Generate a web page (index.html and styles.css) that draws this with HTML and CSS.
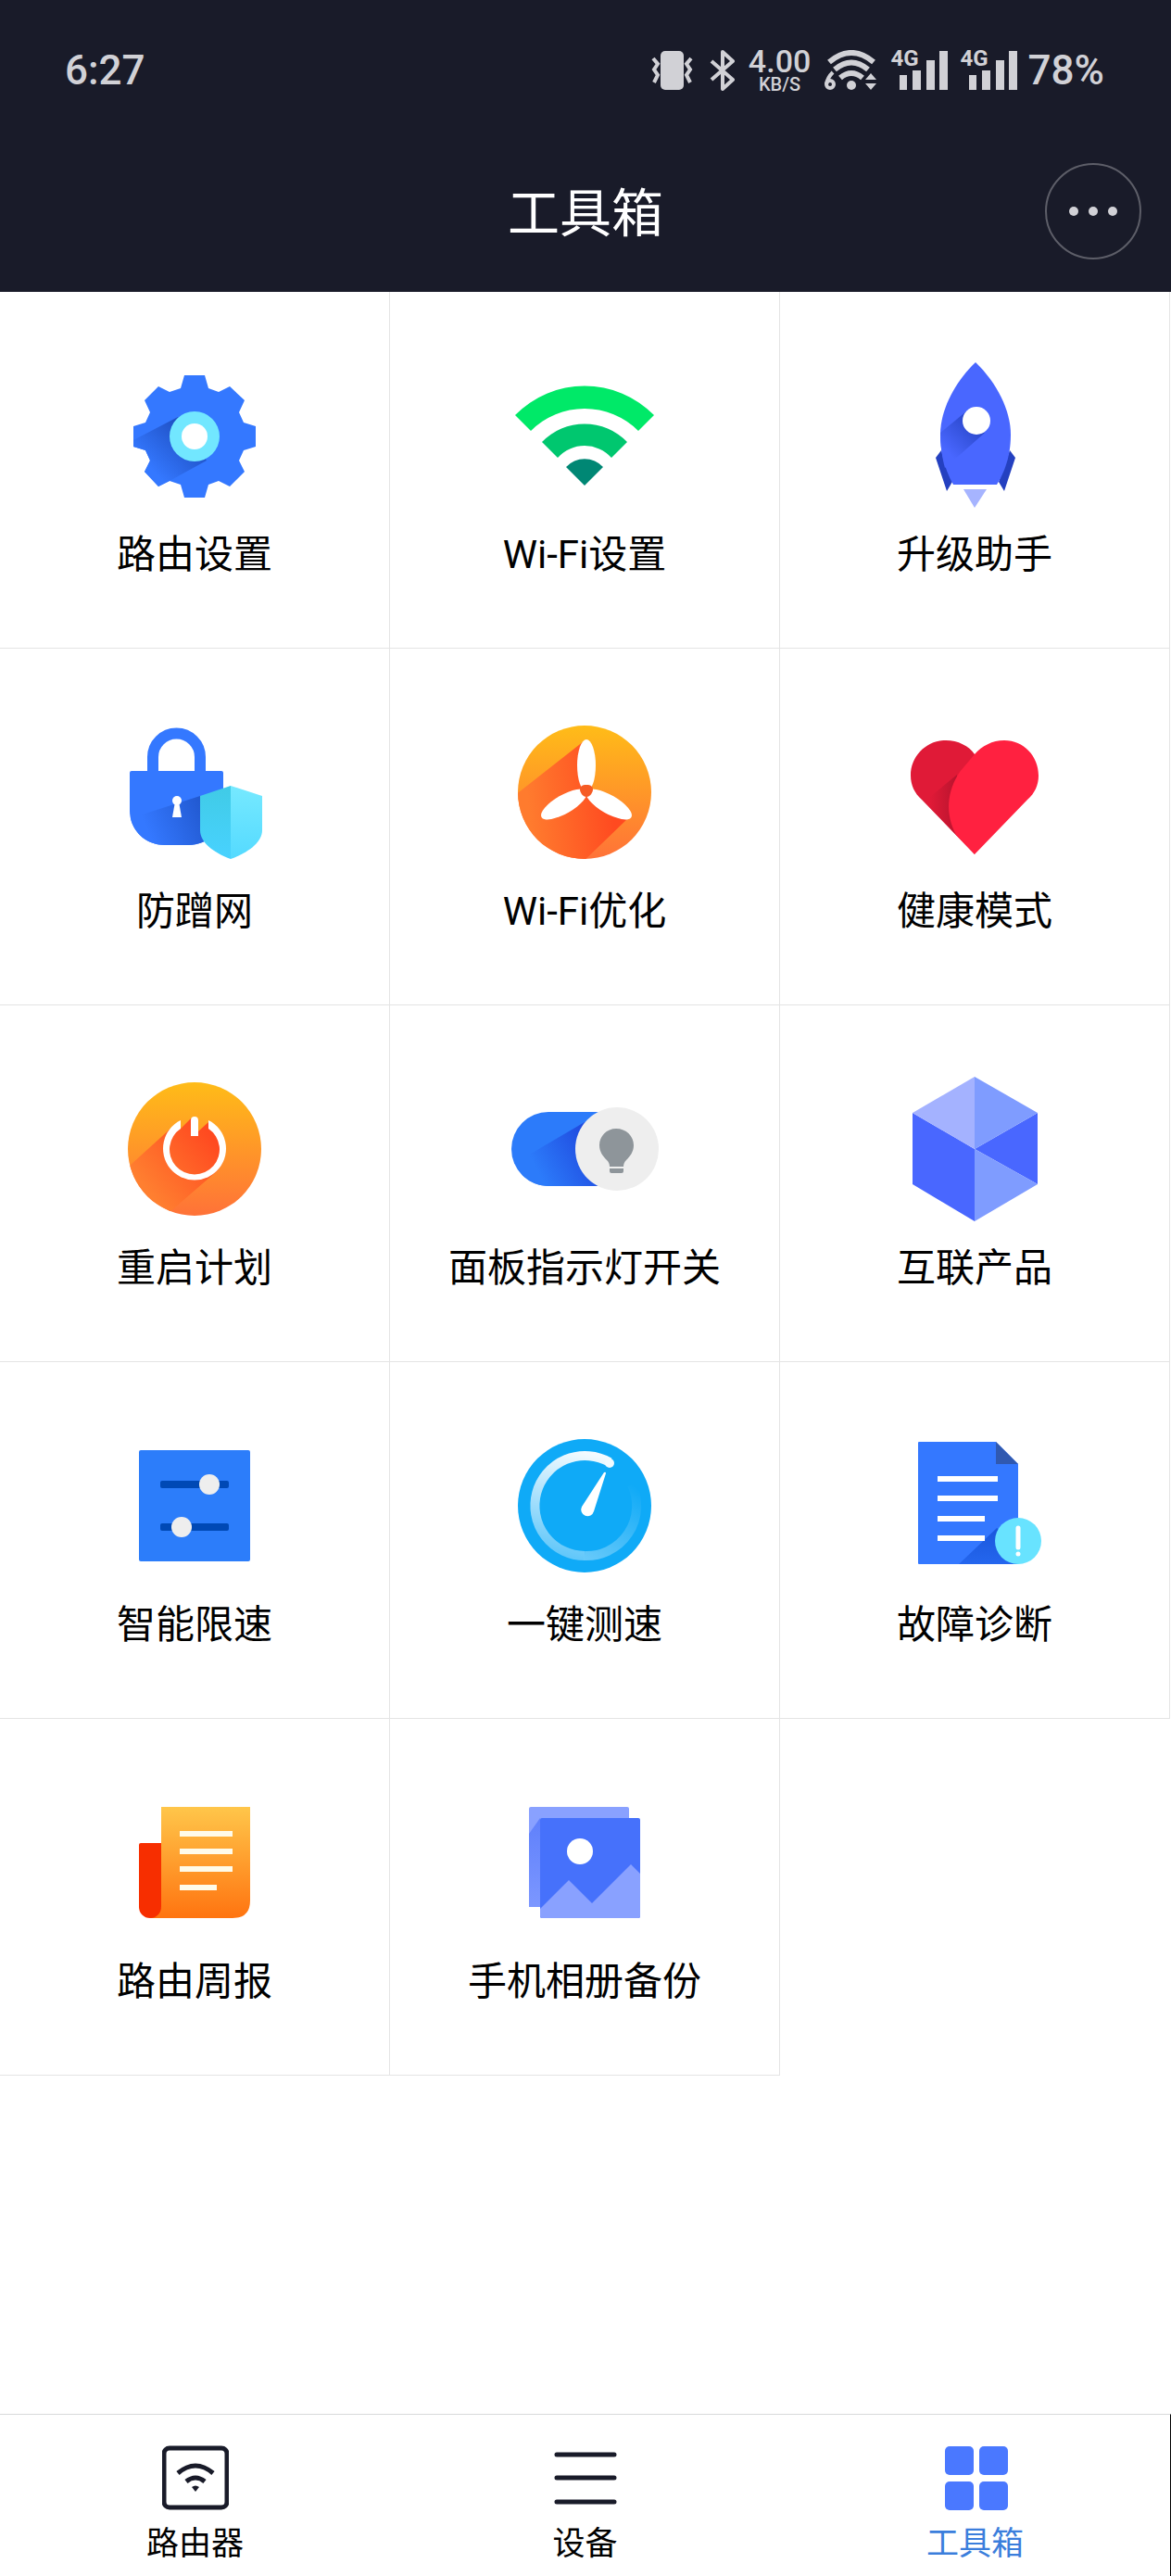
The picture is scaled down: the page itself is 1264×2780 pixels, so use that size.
FILE: index.html
```html
<!DOCTYPE html>
<html lang="zh-CN">
<head>
  <meta charset="UTF-8">
  <meta name="viewport" content="width=device-width, initial-scale=1">
  <title>工具箱</title>
  <link rel="stylesheet" href="styles.css">
</head>
<body>
  <header class="header">
    <div class="status">
      <span class="time">6:27</span>
      <div class="status-right">
        <svg width="50" height="44" viewBox="0 0 50 44" fill="none" stroke="#d1d1d6" stroke-width="4">
          <rect x="10" y="1" width="25" height="42" rx="5" fill="#d1d1d6" stroke="none"/>
          <path d="M2 9l5 6-4 6 4 6-4 8M43 9l-5 6 4 6-4 6 4 8"/>
        </svg>
        <svg width="29" height="44" viewBox="0 0 29 44" fill="none" stroke="#d1d1d6" stroke-width="4" stroke-linejoin="round">
          <path d="M3 12l23 20-11 10V2l11 10L3 32"/>
        </svg>
        <span class="speed"><span>4.00</span><small>KB/S</small></span>
        <svg width="58" height="44" viewBox="0 0 58 44" fill="none" stroke="#d1d1d6" stroke-width="6">
          <path d="M5 13Q29-7 53 13M11 21Q29 6 47 21M17 30Q29 20 41 30"/>
          <circle cx="29" cy="38" r="5" fill="#d1d1d6" stroke="none"/>
          <path d="M44 32l6-7 6 7zM44 36h12l-6 7z" fill="#d1d1d6" stroke="none"/>
          <path d="M9 24Q3 30 2 37" stroke-width="4"/>
          <circle cx="6" cy="37" r="4" stroke-width="4"/>
        </svg>
        <span class="signal">
          <b>4G</b>
          <svg width="63" height="44" viewBox="0 0 63 44" fill="#d1d1d6">
            <path d="M11 27h8v16h-8zM25 22h9v21h-9zM40 11h9v32h-9zM54 1h9v42h-9z"/>
          </svg>
        </span>
        <span class="signal">
          <b>4G</b>
          <svg width="63" height="44" viewBox="0 0 63 44" fill="#d1d1d6">
            <path d="M11 27h8v16h-8zM25 22h9v21h-9zM40 11h9v32h-9zM54 1h9v42h-9z"/>
          </svg>
        </span>
        <span class="battery">78%</span>
      </div>
    </div>
    <div class="titlebar">
      <h1>工具箱</h1>
      <button class="more" type="button" aria-label="更多"><i></i><i></i><i></i></button>
    </div>
  </header>

  <main class="tools">
    <a class="tool" href="#">
      <svg viewBox="0 0 160 160">
        <defs>
          <linearGradient id="gearShade" x1="75" y1="75" x2="34" y2="116" gradientUnits="userSpaceOnUse">
            <stop offset="0" stop-color="#1f50c4"/><stop offset="1" stop-color="#3478ff"/>
          </linearGradient>
        </defs>
        <path fill="#3478ff" d="M69 14h22l4 14 11 4 12-6 16 15-6 13 5 11 13 4v22l-13 4-5 11 6 12-16 16-12-6-11 4-4 14H69l-4-14-12-4-12 6-15-16 6-12-5-11-13-4V69l13-4 5-11-6-13 15-15 12 6 12-4z"/>
        <path fill="url(#gearShade)" d="M62 59L14 84v7l13 4 5 11-6 12 15 16 12-6 40-22z"/>
        <circle cx="80" cy="80" r="27" fill="#72e7ff"/>
        <circle cx="80" cy="80" r="14" fill="#fff"/>
      </svg>
      <span>路由设置</span>
    </a>
    <a class="tool" href="#">
      <svg viewBox="0 0 160 160">
        <path fill="#00e968" d="M5 57A105 105 0 0 1 155 57L138 74A82 82 0 0 0 22 74z"/>
        <path fill="#00c76f" d="M34 86A64 64 0 0 1 126 86L109 103A39 39 0 0 0 51 103z"/>
        <path fill="#008774" d="M60 113A27 27 0 0 1 100 113L80 133z"/>
      </svg>
      <span>Wi-Fi设置</span>
    </a>
    <a class="tool" href="#">
      <svg viewBox="0 0 160 160">
        <defs>
          <linearGradient id="rocketShade" x1="80" y1="66" x2="50" y2="96" gradientUnits="userSpaceOnUse">
            <stop offset="0" stop-color="#2b48cc"/><stop offset="1" stop-color="#4967ff"/>
          </linearGradient>
        </defs>
        <path fill="#2440c0" d="M44 95l-6 8 12 36 6-10zM118 95l6 8-12 36-6-10z"/>
        <path fill="#4967ff" d="M81 0C58 22 43 52 43 78c0 20 5 38 14 54h47c10-16 15-34 15-54C119 52 104 22 81 0z"/>
        <path fill="url(#rocketShade)" d="M71 53L43 76c0 14 2 27 5 38l43-38z"/>
        <circle cx="82" cy="63" r="15" fill="#fff"/>
        <path fill="#a6b4ff" d="M68 137h25l-13 20z"/>
      </svg>
      <span>升级助手</span>
    </a>
    <a class="tool" href="#">
      <svg viewBox="0 0 160 160">
        <defs>
          <linearGradient id="lockShade" x1="92" y1="95" x2="30" y2="122" gradientUnits="userSpaceOnUse">
            <stop offset="0" stop-color="#2158cf"/><stop offset="1" stop-color="#3478ff"/>
          </linearGradient>
          <linearGradient id="shieldLeft" x1="0" y1="0" x2="0" y2="1">
            <stop offset="0" stop-color="#40cbe6"/><stop offset="1" stop-color="#48d2ff"/>
          </linearGradient>
          <linearGradient id="shieldRight" x1="0" y1="0" x2="0" y2="1">
            <stop offset="0" stop-color="#76e9ff"/><stop offset="1" stop-color="#54daff"/>
          </linearGradient>
        </defs>
        <path fill="none" stroke="#3478ff" stroke-width="12" d="M35 58V41a25 25 0 0 1 51 0v17"/>
        <path fill="#3478ff" d="M12 56h97q2 0 2 2v41c0 20-16 37-38 37H48c-22 0-38-17-38-37V58q0-2 2-2z"/>
        <path fill="url(#lockShade)" d="M86 83L11 107c4 17 18 29 37 29h25q9 0 18-4z"/>
        <circle cx="61" cy="88" r="5" fill="#fff"/>
        <path fill="#fff" d="M59 89h4l3 17H56z"/>
        <path fill="url(#shieldLeft)" d="M119 72L86 83v37c0 13 14 24 33 31z"/>
        <path fill="url(#shieldRight)" d="M119 72l34 11v37c0 13-15 24-34 31z"/>
      </svg>
      <span>防蹭网</span>
    </a>
    <a class="tool" href="#">
      <svg viewBox="0 0 160 160">
        <defs>
          <linearGradient id="orange" x1="0" y1="0" x2="0" y2="1">
            <stop offset="0" stop-color="#ffbc18"/><stop offset="1" stop-color="#ff7238"/>
          </linearGradient>
          <linearGradient id="fanShade" x1="20" y1="100" x2="110" y2="90" gradientUnits="userSpaceOnUse">
            <stop offset="0" stop-color="#ff7b2e"/><stop offset="1" stop-color="#ff4a20"/>
          </linearGradient>
          <clipPath id="disc"><circle cx="80" cy="79" r="72"/></clipPath>
        </defs>
        <circle cx="80" cy="79" r="72" fill="url(#orange)"/>
        <path clip-path="url(#disc)" fill="url(#fanShade)" d="M79 24L0 86v76h70l58-56-46-28z"/>
        <g fill="#fff">
          <ellipse cx="82" cy="50" rx="10" ry="28"/>
          <ellipse cx="82" cy="50" rx="10" ry="28" transform="rotate(120 82 78)"/>
          <ellipse cx="82" cy="50" rx="10" ry="28" transform="rotate(240 82 78)"/>
        </g>
        <path fill="#f65b24" d="M82 71c5 0 7 2 7 5s-3 8-7 8-7-5-7-8 2-5 7-5z"/>
      </svg>
      <span>Wi-Fi优化</span>
    </a>
    <a class="tool" href="#">
      <svg viewBox="0 0 160 160">
        <defs>
          <linearGradient id="heartShade" x1="62" y1="88" x2="32" y2="88" gradientUnits="userSpaceOnUse">
            <stop offset="0" stop-color="#b8142e"/><stop offset="1" stop-color="#e01a37"/>
          </linearGradient>
        </defs>
        <path fill="#e01a37" d="M80 38C74 29 62 23 49 23C28 23 11 40 11 61c0 10 4 19 12 26l57 59z"/>
        <path fill="url(#heartShade)" d="M61 60L26 89l35 37z"/>
        <path fill="#ff2140" d="M80 38c8-9 19-15 32-15 21 0 37 17 37 38 0 10-4 19-12 26l-57 59-20-21c-12-23-10-47 4-68z"/>
      </svg>
      <span>健康模式</span>
    </a>
    <a class="tool" href="#">
      <svg viewBox="0 0 160 160">
        <defs>
          <linearGradient id="powerShade" x1="100" y1="68" x2="30" y2="125" gradientUnits="userSpaceOnUse">
            <stop offset="0" stop-color="#ff4a20"/><stop offset="1" stop-color="#ff7f30"/>
          </linearGradient>
        </defs>
        <circle cx="80" cy="79" r="72" fill="url(#orange)"/>
        <path clip-path="url(#disc)" fill="url(#powerShade)" d="M76 46L65 57H54L0 106v56h36l68-59a34 34 0 0 0-9-53L84 60V46z"/>
        <path fill="#fff" d="M65 48A34 34 0 1 0 95 48V57A27 27 0 1 1 65 57z"/>
        <path fill="#fff" d="M76 65V48a4 4 0 0 1 8 0v17z"/>
      </svg>
      <span>重启计划</span>
    </a>
    <a class="tool" href="#">
      <svg viewBox="0 0 160 160">
        <defs>
          <linearGradient id="switchShade" x1="84" y1="70" x2="28" y2="100" gradientUnits="userSpaceOnUse">
            <stop offset="0" stop-color="#204ce0"/><stop offset="1" stop-color="#2c7bfa"/>
          </linearGradient>
        </defs>
        <path fill="#2c7bfa" d="M41 39h59v80H41a40 40 0 0 1 0-80z"/>
        <path fill="url(#switchShade)" d="M80 50L5 94c5 14 19 25 36 25h59V50z"/>
        <circle cx="115" cy="79" r="45" fill="#eee"/>
        <path fill="#8e959a" d="M114 57c11 0 19 8 19 18 0 7-4 12-8 16-2 2-3 4-3 7h-15c0-3-1-5-3-7-4-4-8-9-8-16 0-10 8-18 18-18zM107 100h15v3q0 2-2 2h-11q-2 0-2-2z"/>
      </svg>
      <span>面板指示灯开关</span>
    </a>
    <a class="tool" href="#">
      <svg viewBox="0 0 160 160">
        <path fill="#4967ff" d="M13 40l67 39V157l-67-40zM148 40v77L80 79z"/>
        <path fill="#a4b2ff" d="M80 1v78L13 40z"/>
        <path fill="#7f9cff" d="M80 1l68 39-68 39zM80 79l68 38-68 40z"/>
      </svg>
      <span>互联产品</span>
    </a>
    <a class="tool" href="#">
      <svg viewBox="0 0 160 160">
        <rect x="20" y="19" width="120" height="120" rx="2" fill="#2c7dfa"/>
        <rect x="43" y="52" width="74" height="8" rx="2" fill="#0049b5"/>
        <rect x="43" y="98" width="74" height="8" rx="2" fill="#0049b5"/>
        <circle cx="96" cy="56" r="11" fill="#eee"/>
        <circle cx="66" cy="102" r="11" fill="#eee"/>
      </svg>
      <span>智能限速</span>
    </a>
    <a class="tool" href="#">
      <svg viewBox="0 0 160 160">
        <defs>
          <linearGradient id="dialLeft" x1="95" y1="25" x2="70" y2="135" gradientUnits="userSpaceOnUse">
            <stop offset="0" stop-color="#fff" stop-opacity=".95"/><stop offset="1" stop-color="#fff" stop-opacity=".35"/>
          </linearGradient>
          <linearGradient id="dialRight" x1="80" y1="133" x2="130" y2="55" gradientUnits="userSpaceOnUse">
            <stop offset="0" stop-color="#fff" stop-opacity=".36"/><stop offset="1" stop-color="#fff" stop-opacity="0"/>
          </linearGradient>
        </defs>
        <circle cx="80" cy="79" r="72" fill="#0faaf7"/>
        <path fill="none" stroke="url(#dialLeft)" stroke-width="10" d="M107 32A54 54 0 1 0 80 133"/>
        <path fill="none" stroke="url(#dialRight)" stroke-width="10" d="M80 133A54 54 0 0 0 131 56"/>
        <circle cx="107" cy="33" r="5" fill="#f2fbff"/>
        <path fill="#fff" d="M101 43q2-1 2 1L90 85a7 7 0 1 1-13-5z"/>
      </svg>
      <span>一键测速</span>
    </a>
    <a class="tool" href="#">
      <svg viewBox="0 0 160 160">
        <defs>
          <linearGradient id="docShade" x1="0" y1="0" x2="0" y2="1">
            <stop offset="0" stop-color="#1a57dc"/><stop offset="1" stop-color="#2466ee"/>
          </linearGradient>
        </defs>
        <path fill="#3478ff" d="M20 10h83l24 24v108H20q-1 0-1-1V11q0-1 1-1z"/>
        <path fill="#3059b0" d="M103 10l24 24h-24z"/>
        <path fill="url(#docShade)" d="M104 103l-41 39h64v-25z"/>
        <path stroke="#fff" stroke-width="6" d="M40 50h65M40 71h65M40 93h51M40 114h51"/>
        <circle cx="127" cy="117" r="25" fill="#68e3ff"/>
        <path stroke="#fff" stroke-width="5" stroke-linecap="round" d="M127 103v21M127 131v0"/>
      </svg>
      <span>故障诊断</span>
    </a>
    <a class="tool" href="#">
      <svg viewBox="0 0 160 160">
        <defs>
          <linearGradient id="paper" x1="0" y1="0" x2="0" y2="1">
            <stop offset="0" stop-color="#ffc64a"/><stop offset="1" stop-color="#ff7410"/>
          </linearGradient>
        </defs>
        <path fill="url(#paper)" d="M44 19h96v101q0 19-19 19H32l12-12z"/>
        <path fill="#f72e00" d="M22 58h22v69a12 12 0 0 1-24 0V60q0-2 2-2z"/>
        <path stroke="#fffbea" stroke-width="6" d="M64 48h57M64 67h57M64 86h57M64 106h40"/>
      </svg>
      <span>路由周报</span>
    </a>
    <a class="tool" href="#">
      <svg viewBox="0 0 160 160">
        <defs>
          <linearGradient id="photoShade" x1="0" y1="0" x2="0" y2="1">
            <stop offset="0" stop-color="#5f80fb"/><stop offset="1" stop-color="#7c97ff"/>
          </linearGradient>
        </defs>
        <rect x="20" y="19" width="108" height="108" rx="2" fill="#89a1ff"/>
        <path fill="url(#photoShade)" d="M32 31L20 48v79h12z"/>
        <rect x="32" y="31" width="108" height="108" rx="2" fill="#4671fb"/>
        <path fill="#89a1ff" d="M32 129l31-31 25 25 42-42 10 10v46q0 2-2 2H34q-2 0-2-2z"/>
        <circle cx="75" cy="67" r="14" fill="#fff"/>
      </svg>
      <span>手机相册备份</span>
    </a>
  </main>

  <nav class="tabs">
    <a href="#">
      <svg viewBox="0 0 72 72" fill="none" stroke="#191b29">
        <rect x="2" y="4" width="68" height="64" rx="6" stroke-width="5"/>
        <path stroke-width="5" d="M17 31Q36 15 55 31M26 40Q36 32 46 40"/>
        <path fill="#191b29" stroke="none" d="M32 46q4-3 8 0l-4 5z"/>
      </svg>
      <span>路由器</span>
    </a>
    <a href="#">
      <svg viewBox="0 0 72 72" fill="none" stroke="#191b29" stroke-width="5" stroke-linecap="round">
        <path d="M5 11h62M5 36h62M5 62h62"/>
      </svg>
      <span>设备</span>
    </a>
    <a href="#" class="active">
      <svg viewBox="0 0 72 72" fill="#4a78ff">
        <rect x="3" y="2" width="31" height="31" rx="5"/>
        <rect x="40" y="2" width="31" height="31" rx="5"/>
        <rect x="3" y="40" width="31" height="31" rx="5"/>
        <rect x="40" y="40" width="31" height="31" rx="5"/>
      </svg>
      <span>工具箱</span>
    </a>
  </nav>
</body>
</html>
```
FILE: styles.css
```css
* {
  box-sizing: border-box;
}
body {
  margin: 0;
  min-height: 100vh;
  display: flex;
  flex-direction: column;
  background: #fff;
  color: #000;
  font-family: Roboto, "Noto Sans CJK SC", sans-serif;
}
a {
  color: inherit;
  text-decoration: none;
}

/* header */
.header {
  background: #191b29;
  color: #fff;
  padding: 40px 0 35px;
}
.status {
  display: flex;
  justify-content: space-between;
  align-items: center;
  height: 72px;
  padding: 0 72px 0 70px;
  color: #d1d1d6;
  font-size: 44px;
  font-weight: 500;
}
.status-right {
  display: flex;
  align-items: center;
  gap: 12px;
}
.status-right svg {
  display: block;
}
.speed {
  width: 72px;
  display: flex;
  flex-direction: column;
  align-items: center;
  font-size: 34px;
  line-height: 30px;
}
.speed small {
  font-size: 20px;
  line-height: 20px;
}
.signal {
  position: relative;
}
.signal b {
  position: absolute;
  left: 2px;
  top: 0;
  font-size: 24px;
  line-height: 18px;
}
.titlebar {
  display: grid;
  grid-template-columns: 1fr auto 1fr;
  align-items: center;
  margin-top: 64px;
  padding: 0 32px;
}
.titlebar h1 {
  grid-column: 2;
  margin: 0;
  padding-top: 6px;
  font-size: 56px;
  line-height: 72px;
  font-weight: 400;
}
.more {
  justify-self: end;
  width: 104px;
  height: 104px;
  padding: 0;
  display: flex;
  align-items: center;
  justify-content: center;
  gap: 11px;
  background: none;
  border: 2px solid #5d5e68;
  border-radius: 50%;
}
.more i {
  width: 10px;
  height: 10px;
  border-radius: 50%;
  background: #d1d1d6;
}

/* tool grid */
.tools {
  flex: 1;
  display: grid;
  grid-template-columns: repeat(3, 1fr);
  align-content: start;
  padding-right: 1px;
}
.tool {
  display: flex;
  flex-direction: column;
  align-items: center;
  padding: 76px 0 70px;
  border-right: 1px solid #e4e4e4;
  border-bottom: 1px solid #e4e4e4;
}
.tool svg {
  width: 160px;
  height: 160px;
}
.tool span {
  margin-top: 18px;
  font-size: 42px;
  line-height: 60px;
}

/* bottom tabs */
.tabs {
  display: grid;
  grid-template-columns: repeat(3, 1fr);
  border-top: 1px solid #d8dadb;
  border-right: 1px solid #000;
  background: #fff;
}
.tabs a {
  display: flex;
  flex-direction: column;
  align-items: center;
  padding: 32px 0 8px;
}
.tabs svg {
  width: 72px;
  height: 72px;
}
.tabs span {
  margin-top: 10px;
  font-size: 35px;
  line-height: 52px;
}
.tabs .active {
  color: #3b7edc;
}
```
